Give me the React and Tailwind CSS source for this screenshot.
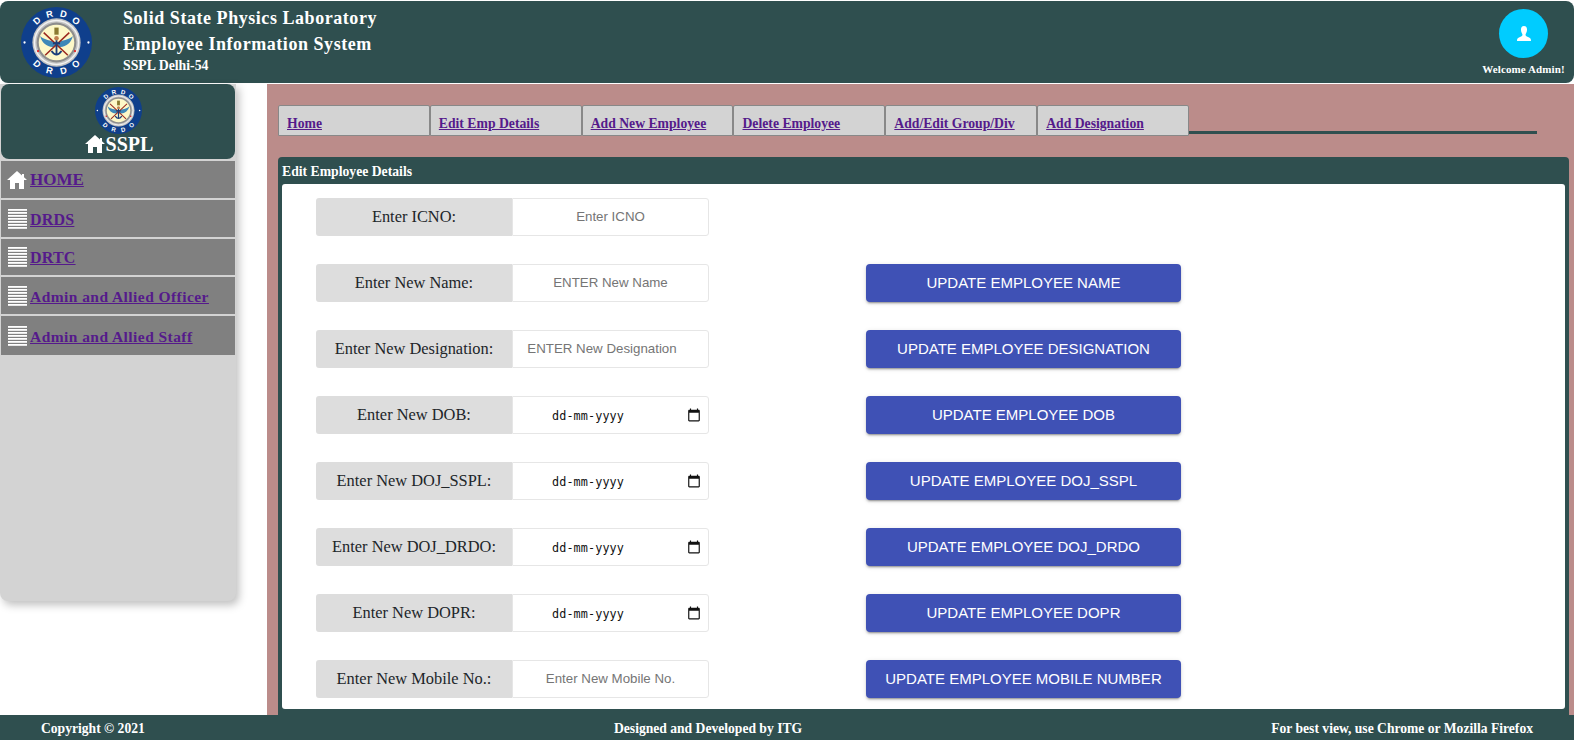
const Logo = ({ size }) => {
  const letter = (ch, angle, bottom, i) => {
    const a = (angle * Math.PI) / 180;
    const x = 50 + 41 * Math.sin(a);
    const y = 50 - 41 * Math.cos(a);
    const rot = bottom ? angle - 180 : angle;
    return (
      <text key={i} x={x} y={y} transform={`rotate(${rot} ${x} ${y})`} textAnchor="middle" dominantBaseline="central" fontSize="13" fontWeight="700" fill="#fff" fontFamily="Liberation Sans, sans-serif">
        {ch}
      </text>
    );
  };
  return (
    <svg width={size} height={size} viewBox="0 0 100 100" className="block shrink-0">
      <circle cx="50" cy="50" r="50" fill="#0f3f8c" />
      <circle cx="5" cy="50" r="1.6" fill="#fff" />
      <circle cx="95" cy="50" r="1.6" fill="#fff" />
      <circle cx="50" cy="50" r="34" fill="#c4c4c4" />
      <circle cx="50" cy="50" r="31" fill="none" stroke="#f2f2f2" strokeWidth="2" />
      <circle cx="50" cy="50" r="28" fill="#8d8d8d" />
      <circle cx="50" cy="50" r="25" fill="#fdf8c8" />
      <circle cx="24" cy="62" r="1.6" fill="#e02020" />
      <circle cx="76" cy="62" r="1.6" fill="#e02020" />
      <path d="M49 50 C42 47 33 47 27 41 C29 51 38 58 48 56 Z" fill="#3f88b8" />
      <path d="M51 50 C58 47 67 47 73 41 C71 51 62 58 52 56 Z" fill="#3f88b8" />
      <rect x="47" y="29" width="6" height="10" fill="#8a7a30" />
      <circle cx="50" cy="44" r="3.2" fill="#c08050" />
      <path d="M32 36 L66 68 M68 36 L34 68" stroke="#9b2a20" strokeWidth="2.2" />
      <path d="M50 47 V68 M43 62 Q50 72 57 62 M45 51 H55" stroke="#1b3f7a" strokeWidth="2.6" fill="none" />
      {["D", "R", "D", "O"].map((c, i) => letter(c, -42 + i * 28, false, "t" + i))}
      {["D", "R", "D", "O"].map((c, i) => letter(c, 222 - i * 28, true, "b" + i))}
    </svg>
  );
};

const House = ({ className }) => (
  <svg viewBox="0 0 20 18" className={className} fill="#fff">
    <path d="M10 0 L15 4.4 V3 H17 V6.2 L20 9 H17 V18 H12 V12 H8 V18 H3 V9 H0 Z" />
  </svg>
);

const Lines = () => (
  <svg viewBox="0 0 19 20" className="w-[19px] h-[20px] shrink-0 ml-[7px] mr-[3px]" fill="#fff">
    <rect x="0" y="0" width="19" height="1.8" />
    <rect x="0" y="3" width="19" height="1.8" />
    <rect x="0" y="6" width="19" height="1.8" />
    <rect x="0" y="9" width="19" height="1.8" />
    <rect x="0" y="12" width="19" height="1.8" />
    <rect x="0" y="15" width="19" height="1.8" />
    <rect x="0" y="18" width="19" height="1.8" />
  </svg>
);

const tabs = ["Home", "Edit Emp Details", "Add New Employee", "Delete Employee", "Add/Edit Group/Div", "Add Designation"];

const nav = [
  { t: "DRDS", h: "h-[38px]", cls: "text-[16px] tracking-[0.2px]" },
  { t: "DRTC", h: "h-[37px]", cls: "text-[16px] tracking-[0.2px]" },
  { t: "Admin and Allied Officer", h: "h-[38px]", cls: "text-[15.5px] tracking-[0.44px]" },
  { t: "Admin and Allied Staff", h: "h-[40px]", cls: "text-[15.5px] tracking-[0.44px]" },
];

const rows = [
  { label: "Enter ICNO:", ph: "Enter ICNO" },
  { label: "Enter New Name:", ph: "ENTER New Name", btn: "UPDATE EMPLOYEE NAME" },
  { label: "Enter New Designation:", ph: "ENTER New Designation", btn: "UPDATE EMPLOYEE DESIGNATION", shift: true },
  { label: "Enter New DOB:", date: true, btn: "UPDATE EMPLOYEE DOB" },
  { label: "Enter New DOJ_SSPL:", date: true, btn: "UPDATE EMPLOYEE DOJ_SSPL" },
  { label: "Enter New DOJ_DRDO:", date: true, btn: "UPDATE EMPLOYEE DOJ_DRDO" },
  { label: "Enter New DOPR:", date: true, btn: "UPDATE EMPLOYEE DOPR" },
  { label: "Enter New Mobile No.:", ph: "Enter New Mobile No.", btn: "UPDATE EMPLOYEE MOBILE NUMBER" },
];

export default function App() {
  return (
    <div className="h-[741px] w-[1574px] overflow-hidden flex flex-col pt-px bg-white font-['Liberation_Serif',serif]">
      <header className="h-[82px] mb-px shrink-0 bg-[#2f4f4f] rounded-lg flex text-white font-bold">
        <div className="ml-[21px] mt-[6px]">
          <Logo size={71} />
        </div>
        <div className="ml-[31px] pt-[4px]">
          <div className="text-[18px] leading-[26px] tracking-[0.55px]">Solid State Physics Laboratory</div>
          <div className="text-[18px] leading-[27px] tracking-[0.55px]">Employee Information System</div>
          <div className="text-[13.8px] leading-[16px]">SSPL Delhi-54</div>
        </div>
        <div className="ml-auto mr-[10px] w-[81px] flex flex-col items-center pt-[8px]">
          <div className="w-[49px] h-[49px] rounded-full bg-[#00ccff] flex items-center justify-center">
            <svg viewBox="0 0 16 16" className="w-[16px] h-[16px]" fill="#fff">
              <path d="M8 0 C10.4 0 11.2 2 11 4 C10.9 6 10 7.5 9.6 8.2 C9.4 9.6 10 10 12 11 C14.5 12 15 12.6 15 15 H1 C1 12.6 1.5 12 4 11 C6 10 6.6 9.6 6.4 8.2 C6 7.5 5.1 6 5 4 C4.8 2 5.6 0 8 0 Z" />
            </svg>
          </div>
          <div className="text-[11px] leading-[13px] mt-[5px] whitespace-nowrap tracking-[0.1px]">Welcome Admin!</div>
        </div>
      </header>

      <div className="flex-1 min-h-0 flex">
        <aside className="w-[236px] h-[517px] shrink-0 bg-[#d3d3d3] rounded-b-lg shadow-[3px_4px_8px_rgba(0,0,0,0.25)] pl-px pr-px flex flex-col">
          <div className="h-[75px] bg-[#2f4f4f] rounded-lg flex flex-col items-center pt-[3px] text-white font-bold">
            <Logo size={47} />
            <div className="flex items-center h-[20px] ml-[2px]">
              <House className="w-[20px] h-[18px] mr-px" />
              <span className="text-[20px] leading-[20px]">SSPL</span>
            </div>
          </div>
          <div className="h-[37px] mt-[2px] bg-[#808080] flex items-center font-bold">
            <House className="w-[20px] h-[18px] shrink-0 ml-[6px] mr-[3px]" />
            <a href="#" className="text-[#551a8b] underline text-[17px]">HOME</a>
          </div>
          {nav.map((n) => (
            <div key={n.t} className={`${n.h} mt-px bg-[#808080] flex items-center font-bold border-t border-[#d3d3d3]`}>
              <Lines />
              <a href="#" className={`text-[#551a8b] underline mt-[2px] ${n.cls}`}>{n.t}</a>
            </div>
          ))}
        </aside>

        <main className="ml-[31px] flex-1 min-w-0 bg-[#bb8c8a] pl-[11px] pr-[5px] pt-[21px] flex flex-col">
          <div className="flex items-end w-[1259px] h-[31px] shrink-0">
            {tabs.map((t) => (
              <div key={t} className="w-[151.83px] h-[31px] shrink-0 bg-[#d3d3d3] border border-[#888] rounded-t-[2px] pl-[8px] pt-[9px] text-[13.7px] leading-[17px] font-bold">
                <a href="#" className="text-[#551a8b] underline">{t}</a>
              </div>
            ))}
            <div className="flex-1 h-[3px] mb-[2px] bg-[#2f4f4f]" />
          </div>

          <section className="mt-[21px] flex-1 min-h-0 bg-[#2f4f4f] rounded-t px-[4px] flex flex-col">
            <div className="h-[27px] shrink-0 text-white font-bold text-[13.7px] leading-[29px]">Edit Employee Details</div>
            <div className="h-[525px] bg-white rounded-[3px] pl-[34px] pt-[14px] flex flex-col gap-[28px]">
              {rows.map((r) => (
                <div key={r.label} className="flex h-[38px] shrink-0">
                  <div className="w-[196px] bg-[#dddddd] rounded-l-[3px] flex items-center justify-center text-[16.4px] text-[#212529]">
                    {r.label}
                  </div>
                  {r.date ? (
                    <div className="w-[197px] border border-[#e6e6e6] rounded-r-[3px] relative flex items-center pl-[39px] pt-[3px] font-['DejaVu_Sans_Mono',monospace] text-[11.8px] tracking-[0.1px] text-[#111]">
                      dd-mm-yyyy
                      <svg viewBox="0 0 24 24" className="absolute right-[7px] top-[11px] w-[14px] h-[14px]" fill="#111">
                        <path d="M20 3h-1V1h-2v2H7V1H5v2H4c-1.1 0-2 .9-2 2v16c0 1.1.9 2 2 2h16c1.1 0 2-.9 2-2V5c0-1.1-.9-2-2-2zm0 18H4V8h16v13z" />
                      </svg>
                    </div>
                  ) : (
                    <input
                      placeholder={r.ph}
                      className={`w-[197px] border border-[#e6e6e6] rounded-r-[3px] text-center text-[13.3px] font-['Liberation_Sans',sans-serif] placeholder:text-[#757575] outline-none ${r.shift ? "pr-[17px]" : ""}`}
                    />
                  )}
                  {r.btn && (
                    <button className="ml-[157px] w-[315px] bg-[#3f51b5] text-white rounded-[4px] text-[15px] font-['Liberation_Sans',sans-serif] shadow-[0_3px_1px_-2px_rgba(0,0,0,0.2),0_2px_2px_0_rgba(0,0,0,0.14),0_1px_5px_0_rgba(0,0,0,0.12)]">
                      {r.btn}
                    </button>
                  )}
                </div>
              ))}
            </div>
          </section>
        </main>
      </div>

      <footer className="h-[25px] shrink-0 mb-px bg-[#2f4f4f] text-white font-bold text-[13.6px] flex items-center pl-[41px] pr-[41px] pt-[3px] justify-between">
        <span>Copyright © 2021</span>
        <span>Designed and Developed by ITG</span>
        <span>For best view, use Chrome or Mozilla Firefox</span>
      </footer>
    </div>
  );
}
